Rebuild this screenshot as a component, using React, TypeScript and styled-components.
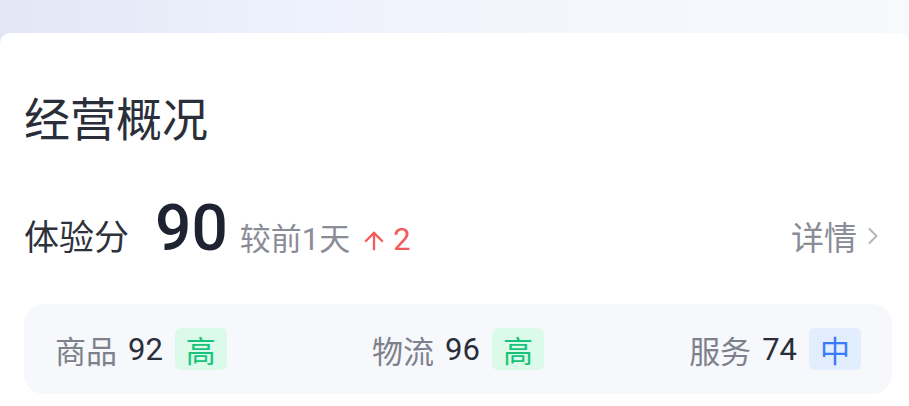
import React from 'react';
import styled, { createGlobalStyle } from 'styled-components';
import { ArrowUp, ChevronRight } from 'lucide-react';

const GlobalStyle = createGlobalStyle`
  html, body {
    margin: 0;
    padding: 0;
    background: #ffffff;
  }
  body {
    font-family: Roboto, "Noto Sans CJK SC", sans-serif;
  }
`;

const Page = styled.div`
  width: 909px;
  height: 406px;
  overflow: hidden;
  display: flex;
  flex-direction: column;
  background: linear-gradient(90deg, #e2e6f6 0%, #edf1fc 30%, #f6f7fc 70%, #f8f9fd 100%);
`;

const TopStrip = styled.div`
  height: 33px;
  flex-shrink: 0;
`;

const Card = styled.div`
  flex: 1;
  background: #ffffff;
  border-radius: 10px 10px 0 0;
  padding: 60px 18px 0 24px;
  display: flex;
  flex-direction: column;
`;

const Title = styled.h1`
  margin: 0;
  font-family: "Noto Sans CJK SC", sans-serif;
  font-weight: 400;
  font-size: 46px;
  line-height: 46px;
  color: #2a2e39;
`;

const ScoreRow = styled.div`
  margin-top: 58px;
  display: flex;
  align-items: baseline;
  justify-content: space-between;
`;

const ScoreLeft = styled.div`
  display: flex;
  align-items: baseline;
`;

const ScoreLabel = styled.span`
  font-family: "Noto Sans CJK SC", sans-serif;
  font-size: 35px;
  color: #2e323d;
  margin-right: 26px;
`;

const ScoreValue = styled.span`
  font-family: Roboto, sans-serif;
  font-size: 64px;
  font-weight: 500;
  line-height: 64px;
  color: #1e2231;
  margin-right: 12px;
`;

const Compare = styled.span`
  font-size: 31px;
  color: #8a8d97;
  margin-right: 10px;
`;

const Delta = styled.span`
  display: inline-flex;
  align-items: baseline;
  gap: 5px;
  font-size: 31px;
  color: #f45b5b;

  svg {
    align-self: center;
    position: relative;
    top: 1px;
  }
`;

const DetailLink = styled.a`
  display: inline-flex;
  align-items: center;
  gap: 2px;
  font-family: "Noto Sans CJK SC", sans-serif;
  font-size: 33px;
  color: #8a8d97;
  text-decoration: none;
  margin-right: 4px;

  svg {
    color: #b3b6bd;
  }
`;

const MetricBox = styled.div`
  margin-top: 43px;
  width: 868px;
  height: 90px;
  box-sizing: border-box;
  padding: 0 31px;
  border-radius: 20px;
  background: #f7f8fc;
  display: flex;
  align-items: center;
  justify-content: space-between;
`;

const Metric = styled.div`
  display: flex;
  align-items: center;
  font-size: 31px;
`;

const MetricLabel = styled.span`
  font-family: "Noto Sans CJK SC", sans-serif;
  color: #7e818b;
  margin-right: 11px;
`;

const MetricValue = styled.span`
  font-family: Roboto, sans-serif;
  color: #2a2e3a;
  margin-right: 12px;
`;

const Badge = styled.span<{ $tone: 'green' | 'blue' }>`
  display: inline-flex;
  align-items: center;
  justify-content: center;
  width: 52px;
  height: 42px;
  border-radius: 6px;
  font-family: "Noto Sans CJK SC", sans-serif;
  font-size: 30px;
  background: ${({ $tone }) => ($tone === 'green' ? '#dcfae9' : '#e2edfd')};
  color: ${({ $tone }) => ($tone === 'green' ? '#17c37a' : '#3a7bfa')};
`;

const metrics = [
  { label: '商品', value: 92, level: '高', tone: 'green' as const },
  { label: '物流', value: 96, level: '高', tone: 'green' as const },
  { label: '服务', value: 74, level: '中', tone: 'blue' as const },
];

const App: React.FC = () => (
  <>
    <GlobalStyle />
    <Page>
      <TopStrip />
      <Card>
        <Title>经营概况</Title>
        <ScoreRow>
          <ScoreLeft>
            <ScoreLabel>体验分</ScoreLabel>
            <ScoreValue>90</ScoreValue>
            <Compare>较前1天</Compare>
            <Delta>
              <ArrowUp size={28} strokeWidth={2} />
              2
            </Delta>
          </ScoreLeft>
          <DetailLink href="#">
            详情
            <ChevronRight size={28} strokeWidth={1.8} />
          </DetailLink>
        </ScoreRow>
        <MetricBox>
          {metrics.map((m) => (
            <Metric key={m.label}>
              <MetricLabel>{m.label}</MetricLabel>
              <MetricValue>{m.value}</MetricValue>
              <Badge $tone={m.tone}>{m.level}</Badge>
            </Metric>
          ))}
        </MetricBox>
      </Card>
    </Page>
  </>
);

export default App;
